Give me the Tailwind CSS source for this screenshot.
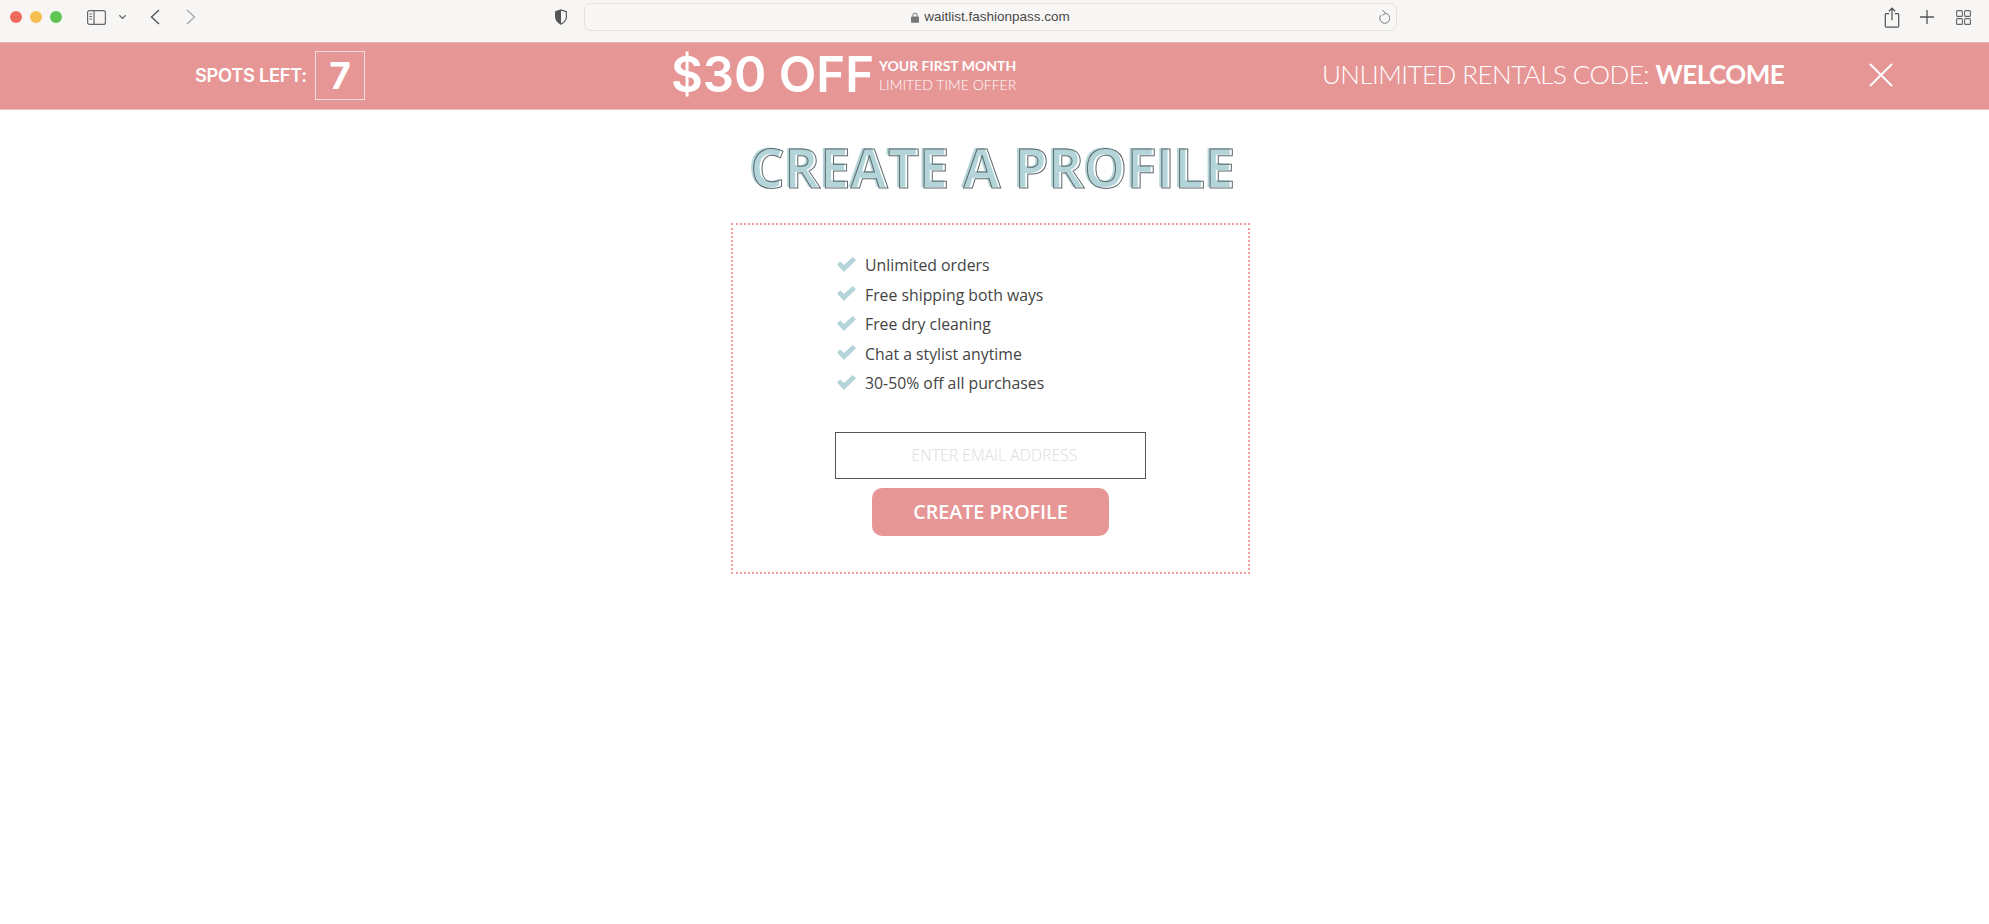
<!DOCTYPE html>
<html lang="en">
<head>
  <meta charset="UTF-8" />
  <title>FashionPass - Create a Profile</title>
  <script src="https://cdn.jsdelivr.net/npm/@tailwindcss/browser@4"></script>
</head>
<body class="bg-white font-['Open_Sans',sans-serif] overflow-hidden h-[924px]">
  <!-- browser toolbar -->
  <div class="h-[42px] pb-[8px] bg-[#f7f6f4] flex items-center text-[#555]">
    <span class="ml-[10px] w-3 h-3 rounded-full bg-[#ec6a5e]"></span>
    <span class="ml-[8px] w-3 h-3 rounded-full bg-[#f4bf4f]"></span>
    <span class="ml-[8px] w-3 h-3 rounded-full bg-[#61c554]"></span>
    <svg class="ml-[25px]" width="19" height="15" viewBox="0 0 19 15" fill="none" stroke="#666" stroke-width="1.2">
      <rect x=".6" y=".6" width="17.800" height="13.800" rx="2" />
      <path d="M7 1v13" />
      <path d="M2.500 4h2.500M2.500 6.500h2.500M2.500 9h2.500" stroke-width="1" />
    </svg>
    <svg class="ml-[12px]" width="9" height="6" viewBox="0 0 10 6" fill="none" stroke="#666" stroke-width="1.4"><path d="M1.500 1l3.500 3.500L8.500 1" /></svg>
    <svg class="ml-[23px]" width="10" height="16" viewBox="0 0 10 16" fill="none" stroke="#555" stroke-width="1.4"><path d="M9 1L1.500 8 9 15" /></svg>
    <svg class="ml-[26px]" width="10" height="16" viewBox="0 0 10 16" fill="none" stroke="#aaa" stroke-width="1.4"><path d="M1 1l7.500 7L1 15" /></svg>
    <svg class="ml-[358px]" width="14" height="16" viewBox="0 0 14 18" fill="none">
      <path d="M7 1l6 2v6c0 4-3 6.500-6 8-3-1.500-6-4-6-8V3z" stroke="#555" stroke-width="1.3" />
      <path d="M7 1L1 3v6c0 4 3 6.500 6 8z" fill="#555" />
    </svg>
    <div class="ml-[16px] w-[813px] h-[28px] rounded-[7px] border border-[#e3e2df] bg-[#f8f7f5] flex items-center relative">
      <div class="flex-1 flex items-center justify-center gap-[5px] text-[13.500px] text-[#4a4a4a] font-['Liberation_Sans',sans-serif]">
        <svg width="8" height="11" viewBox="0 0 9 12"><path d="M2 5V3.500a2.500 2.500 0 015 0V5" fill="none" stroke="#777" stroke-width="1.1" /><rect y="5" width="9" height="7" rx="1" fill="#777" /></svg>
        <span>waitlist.fashionpass.com</span>
      </div>
      <svg class="absolute right-[6px] top-[5px]" width="12" height="16" viewBox="0 0 12 16" fill="none" stroke="#777" stroke-width="1"><path d="M7.500 4.300A5 5 0 1 1 3 6" /><path d="M4.500 1l3 3.300-3 2" /></svg>
    </div>
    <svg class="ml-[487px]" width="16" height="21" viewBox="0 0 16 22" fill="none" stroke="#555" stroke-width="1.3">
      <path d="M5 7H2a1 1 0 00-1 1v12a1 1 0 001 1h12a1 1 0 001-1V8a1 1 0 00-1-1h-3" />
      <path d="M8 14V1.500M4.800 4.500L8 1.300l3.200 3.200" />
    </svg>
    <svg class="ml-[20px]" width="14" height="14" viewBox="0 0 14 14" stroke="#555" stroke-width="1.3"><path d="M7 0v14M0 7h14" /></svg>
    <svg class="ml-[22px]" width="15" height="15" viewBox="0 0 15 15" fill="none" stroke="#666" stroke-width="1.1">
      <rect x=".6" y=".6" width="5.800" height="5.800" rx="1" />
      <rect x="8.600" y=".6" width="5.800" height="5.800" rx="1" />
      <rect x=".6" y="8.600" width="5.800" height="5.800" rx="1" />
      <rect x="8.600" y="8.600" width="5.800" height="5.800" rx="1" />
    </svg>
  </div>

  <!-- promo banner -->
  <div class="h-[68px] bg-[#e79696] flex items-center text-white font-['Lato',sans-serif] border-t border-t-[#eeb4b0] border-b border-b-[#f0bdb8]">
    <span class="ml-[195px] w-[112px] text-[18.300px] font-semibold font-['Inter',sans-serif] whitespace-nowrap tracking-[-0.3px]">SPOTS LEFT:</span>
    <span class="ml-[8px] -mt-[1px] w-[50px] h-[49px] border border-[#f7dcdc] flex items-center justify-center text-[37px] font-bold font-['Inter',sans-serif]">7</span>
    <span class="ml-[306px] -mt-[4px] w-[208px] text-[49px] leading-none font-semibold font-['Inter',sans-serif] whitespace-nowrap">$30 OFF</span>
    <div class="w-[136px] flex flex-col text-[14px] leading-[19px] whitespace-nowrap -mt-[2px]">
      <span class="font-bold">YOUR FIRST MONTH</span>
      <span class="font-light">LIMITED TIME OFFER</span>
    </div>
    <span class="ml-[307px] -mt-[4px] w-[546px] text-[26px] font-light whitespace-nowrap tracking-[-0.55px]">UNLIMITED RENTALS CODE: <b class="font-bold">WELCOME</b></span>
    <svg class="-mt-[2px]" width="26" height="26" viewBox="0 0 26 26" stroke="#fff" stroke-width="2"><path d="M2 2l22 22M24 2L2 24" /></svg>
  </div>

  <!-- signup -->
  <main class="pl-[731px] pt-[25px]">
    <h1 class="w-[524px] text-center text-[54px] leading-[64px] font-bold whitespace-nowrap text-transparent [-webkit-text-stroke:1px_#5f6a6c] [text-shadow:-2.500px_-1px_0_#b3d5da]">CREATE A PROFILE</h1>

    <div class="mt-[24px] w-[519px] h-[351px] border-2 border-dotted border-[#ef9f9c] pt-[26px] pl-[104px]">
      <ul class="text-[15.800px] text-[#444] leading-[29.500px]">
        <li class="flex items-center gap-[9px]"><svg class="-mt-[3px]" width="19" height="15" viewBox="0 0 18 14" fill="#b3d5da"><path d="M0 7l3-3 3.500 3.500L15 0l3 3L6.500 14z" /></svg>Unlimited orders</li>
        <li class="flex items-center gap-[9px]"><svg class="-mt-[3px]" width="19" height="15" viewBox="0 0 18 14" fill="#b3d5da"><path d="M0 7l3-3 3.500 3.500L15 0l3 3L6.500 14z" /></svg>Free shipping both ways</li>
        <li class="flex items-center gap-[9px]"><svg class="-mt-[3px]" width="19" height="15" viewBox="0 0 18 14" fill="#b3d5da"><path d="M0 7l3-3 3.500 3.500L15 0l3 3L6.500 14z" /></svg>Free dry cleaning</li>
        <li class="flex items-center gap-[9px]"><svg class="-mt-[3px]" width="19" height="15" viewBox="0 0 18 14" fill="#b3d5da"><path d="M0 7l3-3 3.500 3.500L15 0l3 3L6.500 14z" /></svg>Chat a stylist anytime</li>
        <li class="flex items-center gap-[9px]"><svg class="-mt-[3px]" width="19" height="15" viewBox="0 0 18 14" fill="#b3d5da"><path d="M0 7l3-3 3.500 3.500L15 0l3 3L6.500 14z" /></svg>30-50% off all purchases</li>
      </ul>
      <input type="email" placeholder="ENTER EMAIL ADDRESS"
             class="block mt-[33px] -ml-[2px] w-[311px] h-[47px] border border-[#555] bg-white text-center text-[15.800px] font-light pl-[8px] placeholder:text-[#dcdcdc]" />
      <button class="block mt-[9px] ml-[35px] w-[237px] h-[48px] rounded-[10px] bg-[#e79696] text-white text-[19.700px] font-semibold">CREATE PROFILE</button>
    </div>
  </main>
</body>
</html>
